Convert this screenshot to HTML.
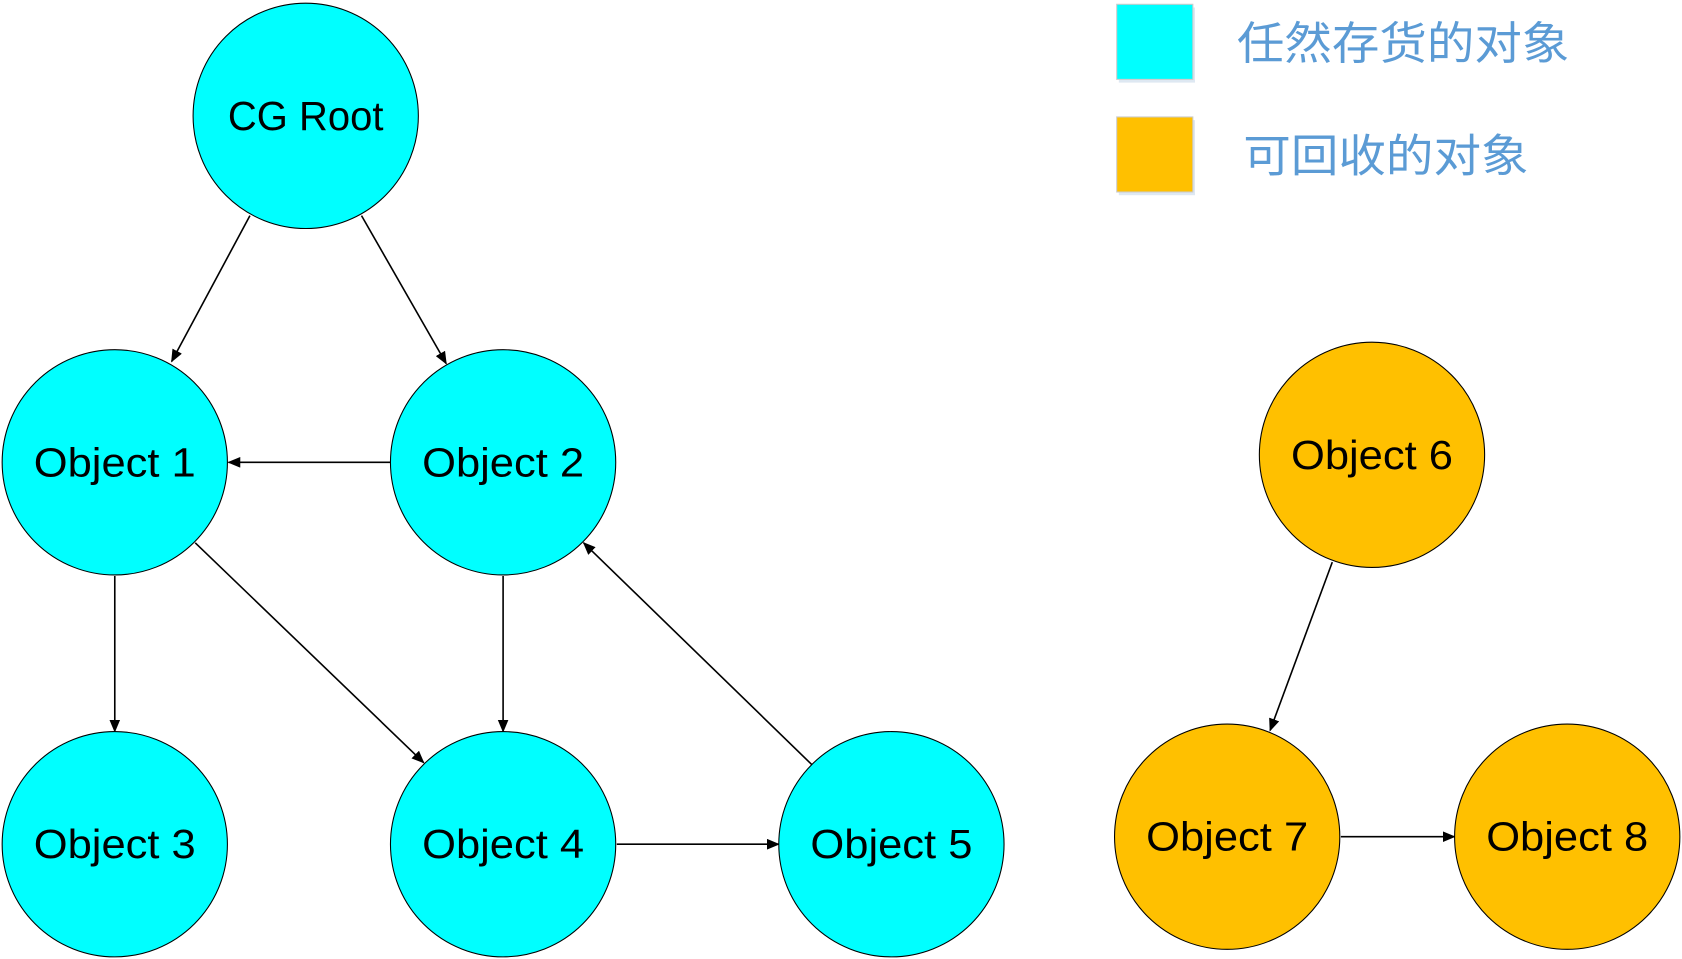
<!DOCTYPE html>
<html><head><meta charset="utf-8"><style>
html,body{margin:0;padding:0;background:#fff;width:1682px;height:959px;overflow:hidden}
svg{display:block}
text{font-family:"Liberation Sans","Noto Sans CJK SC",sans-serif}
</style></head><body>
<svg width="1682" height="959" viewBox="0 0 1568 894" preserveAspectRatio="none" xmlns="http://www.w3.org/2000/svg">
<defs><marker id="a" markerWidth="12" markerHeight="10" refX="11" refY="5" orient="auto" markerUnits="userSpaceOnUse"><path d="M0,0 L12,5 L0,10 z" fill="#000"/></marker></defs>
<g stroke="#000" stroke-width="1.5" marker-end="url(#a)">
<line x1="233" y1="201" x2="160" y2="337"/>
<line x1="337" y1="201" x2="416" y2="339"/>
<line x1="364" y1="431" x2="213" y2="431"/>
<line x1="107" y1="537" x2="107" y2="682"/>
<line x1="182" y1="506" x2="395" y2="711"/>
<line x1="469" y1="537" x2="469" y2="682"/>
<line x1="575" y1="787" x2="726" y2="787"/>
<line x1="757" y1="713" x2="544" y2="506"/>
<line x1="1242" y1="524" x2="1184" y2="681"/>
<line x1="1250" y1="780" x2="1356" y2="780"/>
</g>
<g stroke="#000" stroke-width="1">
<circle cx="285" cy="108" r="105" fill="#00ffff"/>
<circle cx="107" cy="431" r="105" fill="#00ffff"/>
<circle cx="469" cy="431" r="105" fill="#00ffff"/>
<circle cx="107" cy="787" r="105" fill="#00ffff"/>
<circle cx="469" cy="787" r="105" fill="#00ffff"/>
<circle cx="831" cy="787" r="105" fill="#00ffff"/>
<circle cx="1279" cy="424" r="105" fill="#ffc000"/>
<circle cx="1144" cy="780" r="105" fill="#ffc000"/>
<circle cx="1461" cy="780" r="105" fill="#ffc000"/>
</g>
<g font-size="38" text-anchor="middle" fill="#000" lengthAdjust="spacingAndGlyphs">
<text x="285" y="121" textLength="145" lengthAdjust="spacingAndGlyphs">CG Root</text>
<text x="107" y="444" textLength="151" lengthAdjust="spacingAndGlyphs">Object 1</text>
<text x="469" y="444" textLength="151" lengthAdjust="spacingAndGlyphs">Object 2</text>
<text x="107" y="800" textLength="151" lengthAdjust="spacingAndGlyphs">Object 3</text>
<text x="469" y="800" textLength="151" lengthAdjust="spacingAndGlyphs">Object 4</text>
<text x="831" y="800" textLength="151" lengthAdjust="spacingAndGlyphs">Object 5</text>
<text x="1279" y="437" textLength="151" lengthAdjust="spacingAndGlyphs">Object 6</text>
<text x="1144" y="793" textLength="151" lengthAdjust="spacingAndGlyphs">Object 7</text>
<text x="1461" y="793" textLength="151" lengthAdjust="spacingAndGlyphs">Object 8</text>
</g>
<rect x="1043" y="7" width="71" height="70" fill="#c8d8ea" opacity="0.6"/>
<rect x="1041" y="4" width="71" height="70" fill="#00ffff" stroke="#ccc" stroke-width="1"/>
<rect x="1043" y="112" width="71" height="70" fill="#c8d8ea" opacity="0.6"/>
<rect x="1041" y="109" width="71" height="70" fill="#ffc000" stroke="#ccc" stroke-width="1"/>
<g font-size="42" fill="#5b9bd5">
<text x="1153" y="55" textLength="310" lengthAdjust="spacingAndGlyphs">任然存货的对象</text>
<text x="1159" y="160" textLength="266" lengthAdjust="spacingAndGlyphs">可回收的对象</text>
</g>
</svg>
</body></html>
